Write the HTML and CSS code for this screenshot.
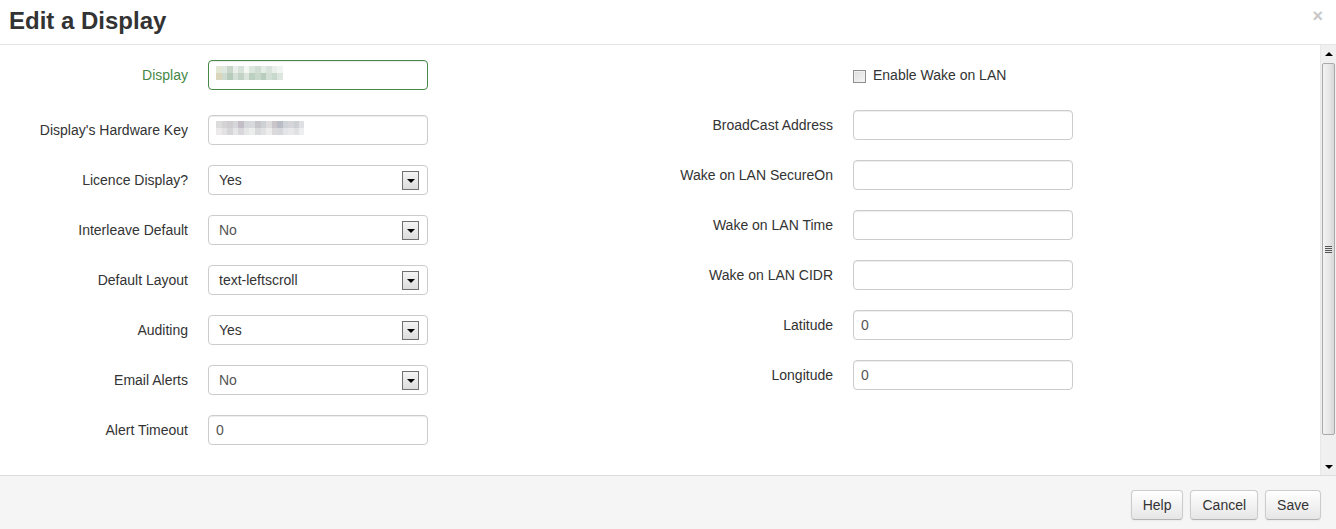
FILE: index.html
```html
<!DOCTYPE html>
<html>
<head>
<meta charset="utf-8">
<link rel="stylesheet" href="styles.css">
</head>
<body>
<div class="modal">
  <div class="modal-header">
    <h3>Edit a Display</h3>
    <span class="close">×</span>
  </div>
  <div class="modal-body">
    <div class="content">
      <div class="col col-left">
        <div class="row first success">
          <label>Display</label>
          <div class="field">
            <input type="text" value="">
            <span class="mosaic mosaic-green"></span>
          </div>
        </div>
        <div class="row">
          <label>Display's Hardware Key</label>
          <div class="field">
            <input type="text" value="">
            <span class="mosaic mosaic-grey"></span>
          </div>
        </div>
        <div class="row">
          <label>Licence Display?</label>
          <div class="select"><span class="val dark">Yes</span><span class="arrow"></span></div>
        </div>
        <div class="row">
          <label>Interleave Default</label>
          <div class="select"><span class="val">No</span><span class="arrow"></span></div>
        </div>
        <div class="row">
          <label>Default Layout</label>
          <div class="select"><span class="val dark">text-leftscroll</span><span class="arrow"></span></div>
        </div>
        <div class="row">
          <label>Auditing</label>
          <div class="select"><span class="val dark">Yes</span><span class="arrow"></span></div>
        </div>
        <div class="row">
          <label>Email Alerts</label>
          <div class="select"><span class="val">No</span><span class="arrow"></span></div>
        </div>
        <div class="row">
          <label>Alert Timeout</label>
          <input type="text" value="0">
        </div>
      </div>
      <div class="col col-right">
        <div class="row check-row">
          <span class="checkbox"></span>
          <span class="check-label">Enable Wake on LAN</span>
        </div>
        <div class="row">
          <label>BroadCast Address</label>
          <input type="text" value="">
        </div>
        <div class="row">
          <label>Wake on LAN SecureOn</label>
          <input type="text" value="">
        </div>
        <div class="row">
          <label>Wake on LAN Time</label>
          <input type="text" value="">
        </div>
        <div class="row">
          <label>Wake on LAN CIDR</label>
          <input type="text" value="">
        </div>
        <div class="row">
          <label>Latitude</label>
          <input type="text" value="0">
        </div>
        <div class="row">
          <label>Longitude</label>
          <input type="text" value="0">
        </div>
      </div>
    </div>
    <div class="scrollbar">
      <div class="sb-btn"><span class="tri-up"></span></div>
      <div class="sb-thumb"><span class="grip"></span></div>
      <div class="sb-track"></div>
      <div class="sb-btn"><span class="tri-down"></span></div>
    </div>
  </div>
  <div class="modal-footer">
    <button class="btn">Help</button>
    <button class="btn">Cancel</button>
    <button class="btn">Save</button>
  </div>
</div>
</body>
</html>
```
FILE: styles.css
```css
* { box-sizing: border-box; }
html, body { margin: 0; padding: 0; background: #fff; }
body {
  font-family: "Liberation Sans", Arial, sans-serif;
  font-size: 14px;
  color: #333;
  width: 1336px;
  height: 529px;
  overflow: hidden;
}
.modal { display: flex; flex-direction: column; height: 529px; }
.modal-header {
  height: 45px;
  border-bottom: 1px solid #e5e5e5;
  padding: 6px 9px 0;
  position: relative;
}
.modal-header h3 {
  margin: 0;
  font-size: 24px;
  line-height: 30px;
  font-weight: bold;
  color: #333;
}
.close {
  position: absolute;
  right: 13px;
  top: 6px;
  font-size: 18px;
  font-weight: bold;
  color: #c8c8c8;
  line-height: 20px;
}
.modal-body {
  height: 430px;
  display: flex;
}
.content {
  flex: 1;
  display: flex;
  padding: 15px 0 0 28px;
}
.col { display: flex; flex-direction: column; gap: 20px; }
.col-left { width: 645px; }
.col-right { flex: 1; }
.row {
  display: flex;
  align-items: center;
  height: 30px;
}
.row.first { margin-bottom: 5px; }
.row label {
  width: 160px;
  margin-right: 20px;
  text-align: right;
  line-height: 20px;
  color: #333;
}
.success label { color: #468847; }
.field { position: relative; width: 220px; height: 30px; }
input[type=text] {
  width: 220px;
  height: 30px;
  border: 1px solid #ccc;
  border-radius: 4px;
  padding: 4px 7px;
  font-family: "Liberation Sans", Arial, sans-serif;
  font-size: 14px;
  color: #555;
  box-shadow: inset 0 1px 1px rgba(0,0,0,0.075);
  outline: none;
}
.success input[type=text] { border-color: #468847; }
.mosaic {
  position: absolute;
  left: 8px;
  top: 6px;
  height: 14px;
}
.mosaic-green {
  width: 67px;
  background:
    linear-gradient(90deg, #e2e6d4 0 6px, #dfe8e0 6px 11px, #c7d6c8 11px 17px, #e9eeea 17px 22px, #d7e3da 22px 28px, #f4f7f4 28px 33px, #dbe7dc 33px 39px, #d0ddd3 39px 45px, #e4ece6 45px 50px, #d9e3dc 50px 56px, #e8efeb 56px 61px, #f0f4f2 61px 67px) top / 100% 7px no-repeat,
    linear-gradient(90deg, #d9d6bc 0 6px, #cddbd0 6px 11px, #b7cbbd 11px 17px, #d4e0d6 17px 22px, #c2d3c6 22px 28px, #dbe5dc 28px 33px, #bcd0c0 33px 39px, #c8d8cb 39px 45px, #b9cdbd 45px 50px, #d2dfd5 50px 56px, #c9d8cc 56px 61px, #dce6df 61px 67px) bottom / 100% 7px no-repeat;
}
.mosaic-grey {
  width: 88px;
  background:
    linear-gradient(90deg, #dcdcdc 0 6px, #d3d3d6 6px 11px, #cfcdd0 11px 17px, #d6d6da 17px 22px, #c3bec6 22px 28px, #d5d8da 28px 33px, #d8d9dc 33px 39px, #c6c6ca 39px 45px, #cdd1d4 45px 50px, #dedcdc 50px 56px, #c9c5c8 56px 61px, #b9bcc4 61px 67px, #cfd2d6 67px 72px, #d6d6da 72px 78px, #cccfd3 78px 83px, #dfe0e3 83px 88px) top / 100% 7px no-repeat,
    linear-gradient(90deg, #eceaea 0 6px, #e2e1e4 6px 11px, #d6d6da 11px 17px, #e6e6e8 17px 22px, #d9d6dc 22px 28px, #e5e6e8 28px 33px, #eceded 33px 39px, #d9dadc 39px 45px, #e0e2e4 45px 50px, #ededed 50px 56px, #dcd9dc 56px 61px, #d5d7dc 61px 67px, #e2e4e7 67px 72px, #e8e8ea 72px 78px, #dfe1e4 78px 83px, #eeeef0 83px 88px) bottom / 100% 7px no-repeat;
}
.select {
  width: 220px;
  height: 30px;
  border: 1px solid #ccc;
  border-radius: 4px;
  display: flex;
  align-items: center;
  padding-left: 10px;
  position: relative;
  background: #fff;
}
.val { color: #555; }
.val.dark { color: #333; }
.arrow {
  position: absolute;
  right: 8px;
  top: 5px;
  width: 17px;
  height: 19px;
  border: 1px solid #707070;
  background: linear-gradient(#f4f4f4, #dcdcdc);
}
.arrow::after {
  content: "";
  position: absolute;
  left: 4px;
  top: 7px;
  border-left: 4px solid transparent;
  border-right: 4px solid transparent;
  border-top: 4px solid #000;
}
.check-row { padding-left: 180px; }
.checkbox {
  width: 13px;
  height: 13px;
  border: 1px solid #8f8f8f;
  background: linear-gradient(135deg, #dcdcdc, #f6f6f6);
  box-shadow: inset 0 0 0 1px #f0f0f0;
  margin-right: 7px;
  margin-top: 3px;
}
.check-label { color: #333; line-height: 20px; }
.scrollbar {
  width: 16px;
  height: 430px;
  background: #f0f0f0;
  display: flex;
  flex-direction: column;
  border-left: 1px solid #e8e8e8;
}
.sb-btn {
  height: 17px;
  display: flex;
  align-items: center;
  justify-content: center;
}
.tri-up {
  border-left: 4px solid transparent;
  border-right: 4px solid transparent;
  border-bottom: 4px solid #000;
}
.tri-down {
  border-left: 4px solid transparent;
  border-right: 4px solid transparent;
  border-top: 4px solid #000;
}
.sb-thumb {
  height: 372px;
  margin: 1px 1px 0 1px;
  border: 1px solid #a9a9a9;
  border-radius: 2px;
  background: linear-gradient(90deg, #f3f3f3, #e6e6e6 60%, #d8d8d8);
  display: flex;
  align-items: center;
  justify-content: center;
}
.grip {
  width: 7px;
  height: 7px;
  background: repeating-linear-gradient(#555 0, #555 1px, #e6e6e6 1px, #e6e6e6 2px);
}
.sb-track { flex: 1; }
.modal-footer {
  flex: 1;
  background: #f5f5f5;
  border-top: 1px solid #ddd;
  display: flex;
  justify-content: flex-end;
  align-items: flex-start;
  gap: 7px;
  padding: 14px 15px 0 0;
}
.btn {
  height: 30px;
  padding: 4px 11px;
  font-family: "Liberation Sans", Arial, sans-serif;
  font-size: 14px;
  line-height: 20px;
  color: #333;
  border: 1px solid #ccc;
  border-bottom-color: #b3b3b3;
  border-radius: 4px;
  background: linear-gradient(#ffffff, #e6e6e6);
  box-shadow: inset 0 1px 0 rgba(255,255,255,0.2), 0 1px 2px rgba(0,0,0,0.05);
}
```
